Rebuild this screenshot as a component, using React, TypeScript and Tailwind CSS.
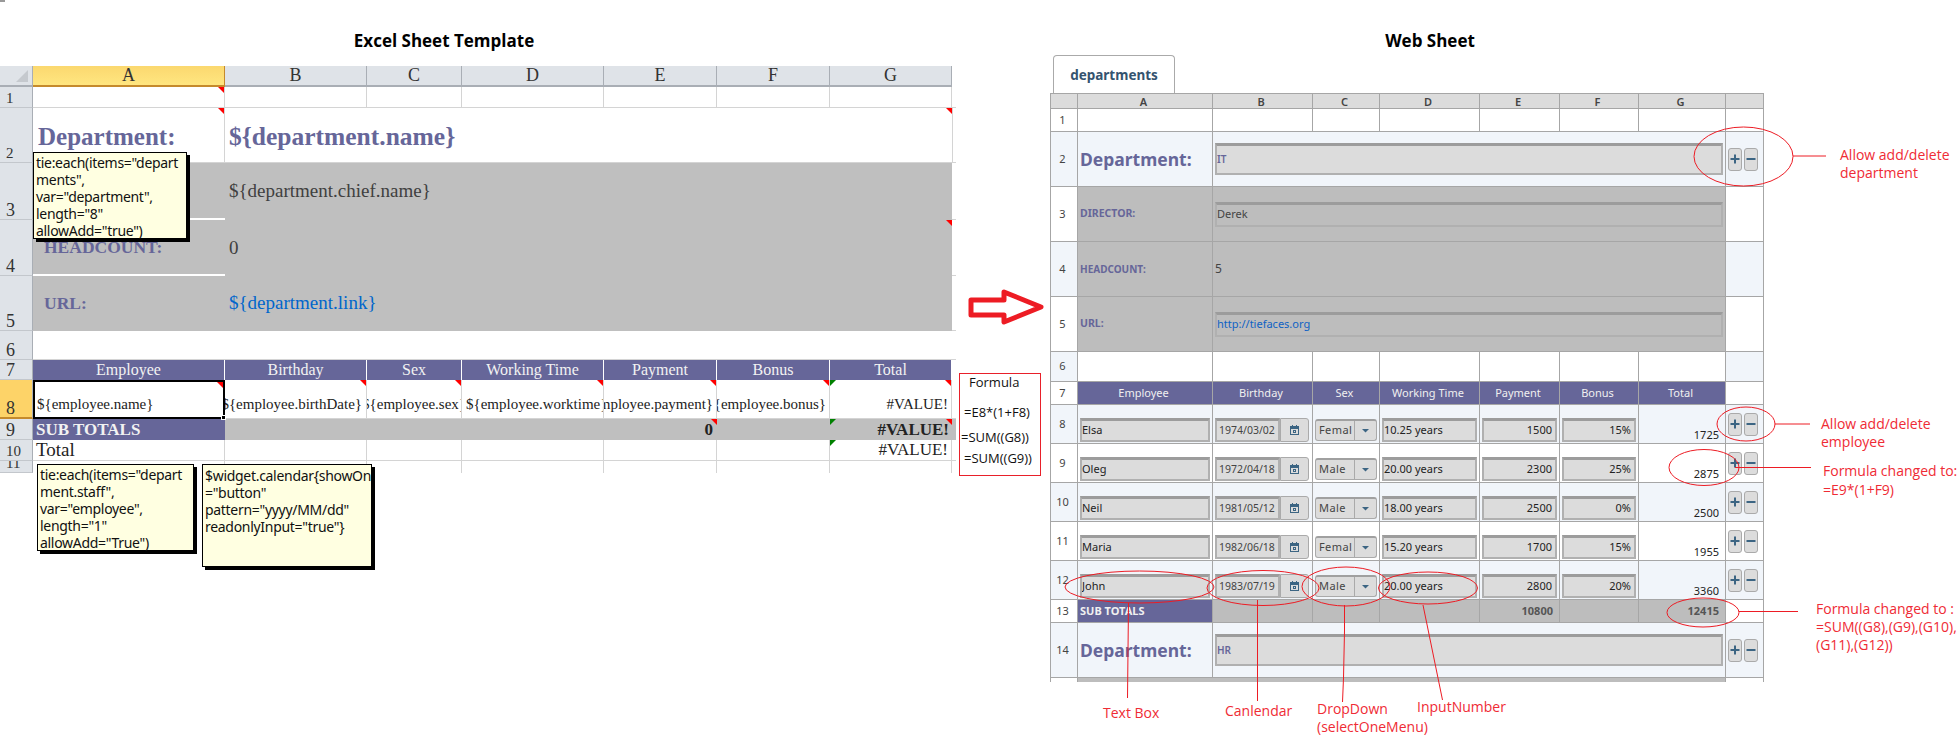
const serif = "font-['Liberation_Serif',serif]";

function Flag({ color = 'red' }: { color?: 'red' | 'green' }) {
  if (color === 'green') {
    return <span className="absolute left-0 top-0 h-[6px] w-[6px] bg-[#008000] [clip-path:polygon(0_0,100%_0,0_100%)]" />;
  }
  return <span className="absolute right-0 top-0 h-[6px] w-[6px] bg-[#ff0000] [clip-path:polygon(0_0,100%_0,100%_100%)]" />;
}

function XHead({ label, active }: { label: string; active?: boolean }) {
  return (
    <div
      className={
        active
          ? "flex items-center justify-center border-r border-b-2 border-r-[#c58a2c] border-b-[#c58a2c] bg-gradient-to-b from-[#fbd86f] to-[#ffe680] font-['Liberation_Serif',serif] text-[18px] text-[#333]"
          : "flex items-center justify-center border-r border-b-2 border-r-[#a9aeb5] border-b-[#a9aeb5] bg-[#dfe3e8] font-['Liberation_Serif',serif] text-[18px] text-[#333]"
      }
    >
      {label}
    </div>
  );
}

function XRow({ n, active, small }: { n: number; active?: boolean; small?: boolean }) {
  return (
    <div
      className={
        (active ? 'border-b-2 border-b-[#c58a2c] bg-[#fdd368] ' : 'border-b border-b-[#c3c7cc] bg-[#dfe3e8] ') +
        (small ? 'text-[15px] ' : 'text-[18px] ') +
        "flex items-end overflow-hidden border-r border-r-[#a9aeb5] pl-[6px] font-['Liberation_Serif',serif] leading-[18px] text-[#333]"
      }
    >
      {n}
    </div>
  );
}

function XCell({ className = '', children }: { className?: string; children?: React.ReactNode }) {
  return <div className={'relative overflow-hidden whitespace-nowrap border-r border-b border-[#d4d4d4] ' + className}>{children}</div>;
}

function ExcelSheet() {
  const heads = ['Employee', 'Birthday', 'Sex', 'Working Time', 'Payment', 'Bonus', 'Total'];
  return (
    <div className={'grid w-fit grid-cols-[33px_192px_142px_95px_142px_113px_113px_122px_4px] grid-rows-[21px_21px_55px_57px_56px_55px_29px_20px_39px_21px_21px_12px] ' + serif}>
      <div className="relative border-r border-b-2 border-r-[#a9aeb5] border-b-[#a9aeb5] bg-[#dfe3e8]">
        <span className="absolute bottom-[3px] right-[4px] h-[12px] w-[12px] bg-[#c5c9ce] [clip-path:polygon(100%_0,100%_100%,0_100%)]" />
      </div>
      <XHead label="A" active />
      {['B', 'C', 'D', 'E', 'F', 'G'].map((c) => (
        <XHead key={c} label={c} />
      ))}
      <div />

      <XRow n={1} small />
      <XCell><Flag /></XCell>
      <XCell /><XCell /><XCell /><XCell /><XCell /><XCell />
      <div className="border-b border-[#d4d4d4]" />

      <XRow n={2} small />
      <XCell className="pl-[5px] pt-[10px] text-[25px] font-bold text-[#666699]"><Flag />Department:</XCell>
      <XCell className="col-span-6 border-r-0 pl-[4px] pt-[10px] text-[25.5px] font-bold text-[#666699]"><Flag />{'${department.name}'}</XCell>
      <div className="border-b border-l border-[#d4d4d4]" />

      <XRow n={3} />
      <div className="border-b-2 border-white bg-[#bfbfbf]" />
      <div className="col-span-6 flex items-center bg-[#bfbfbf] pl-[4px] text-[19px] text-[#404040]">{'${department.chief.name}'}</div>
      <div className="border-b border-[#d4d4d4]" />

      <XRow n={4} />
      <div className="flex items-center border-b-2 border-white bg-[#bfbfbf] pl-[11px] text-[17.5px] font-bold text-[#666699]">HEADCOUNT:</div>
      <div className="relative col-span-6 flex items-center bg-[#bfbfbf] pl-[4px] text-[19px] text-[#404040]"><Flag />0</div>
      <div className="border-b border-[#d4d4d4]" />

      <XRow n={5} />
      <div className="flex items-center bg-[#bfbfbf] pl-[11px] text-[17.5px] font-bold text-[#666699]">URL:</div>
      <div className="col-span-6 flex items-center bg-[#bfbfbf] pl-[4px] text-[19px] text-[#0066cc]">{'${department.link}'}</div>
      <div className="border-b border-[#d4d4d4]" />

      <XRow n={6} />
      <XCell className="col-span-7 border-r-0" />
      <div className="border-b border-[#d4d4d4]" />

      <XRow n={7} />
      {heads.map((h) => (
        <div key={h} className="flex items-center justify-center border-r border-white bg-[#666699] text-[16px] text-[#f2f2f2]">{h}</div>
      ))}
      <div />

      <XRow n={8} active />
      <div className="relative flex items-end border-2 border-black bg-white pb-[2px] pl-[2px] text-[15px] text-[#222]">
        <Flag />
        {'${employee.name}'}
        <span className="absolute bottom-[-3px] right-[-3px] z-10 h-[5px] w-[5px] border border-white bg-black" />
      </div>
      <XCell className="flex items-end justify-end pb-[3px] pr-[4px] text-[15px] text-[#222]"><Flag /><span className="shrink-0">{'${employee.birthDate}'}</span></XCell>
      <XCell className="flex items-end justify-center pb-[3px] text-[15px] text-[#222]"><Flag /><span className="shrink-0">{'${employee.sex}'}</span></XCell>
      <XCell className="flex items-end pb-[3px] pl-[4px] text-[15px] text-[#222]"><Flag />{'${employee.worktime}'}</XCell>
      <XCell className="flex items-end justify-end pb-[3px] pr-[3px] text-[15px] text-[#222]"><Flag /><span className="shrink-0">{'${employee.payment}'}</span></XCell>
      <XCell className="flex items-end justify-end pb-[3px] pr-[3px] text-[15px] text-[#222]"><Flag /><span className="shrink-0">{'${employee.bonus}'}</span></XCell>
      <XCell className="flex items-end justify-end pb-[3px] pr-[3px] text-[15px] text-[#222]"><Flag /><Flag color="green" />#VALUE!</XCell>
      <div className="border-b border-[#d4d4d4]" />

      <XRow n={9} />
      <div className="flex items-center bg-[#666699] pl-[3px] text-[17px] font-bold text-[#f2f2f2]">SUB TOTALS</div>
      <div className="bg-[#bfbfbf]" /><div className="bg-[#bfbfbf]" /><div className="bg-[#bfbfbf]" />
      <div className="relative flex items-center justify-end bg-[#bfbfbf] pr-[4px] text-[17px] font-bold text-[#222]"><Flag />0</div>
      <div className="bg-[#bfbfbf]" />
      <div className="relative flex items-center justify-end bg-[#bfbfbf] pr-[3px] text-[17px] font-bold text-[#222]"><Flag /><Flag color="green" />#VALUE!</div>
      <div className="bg-[#bfbfbf]" />

      <XRow n={10} small />
      <XCell className="pl-[3px] text-[19px] leading-[20px] text-[#222]">Total</XCell>
      <XCell /><XCell /><XCell /><XCell /><XCell />
      <XCell className="pr-[3px] text-right text-[17px] leading-[20px] text-[#222]"><Flag color="green" />#VALUE!</XCell>
      <div className="border-b border-[#d4d4d4]" />

      <XRow n={11} small />
      <div className="border-r border-[#d4d4d4]" /><div className="border-r border-[#d4d4d4]" /><div className="border-r border-[#d4d4d4]" />
      <div className="border-r border-[#d4d4d4]" /><div className="border-r border-[#d4d4d4]" /><div className="border-r border-[#d4d4d4]" /><div className="border-r border-[#d4d4d4]" />
      <div />
    </div>
  );
}

function Note({ className, lines }: { className: string; lines: string[] }) {
  return (
    <div className={"absolute whitespace-nowrap border border-black bg-[#ffffe1] font-['Noto_Sans',sans-serif] text-[14px] leading-[17px] tracking-[-0.3px] text-[#111] shadow-[3px_3px_0_#000] " + className}>
      {lines.map((l) => (
        <div key={l}>{l}</div>
      ))}
    </div>
  );
}

function WCell({ className = '', children }: { className?: string; children?: React.ReactNode }) {
  return <div className={'relative border-r border-b border-[#a6a6a6] ' + className}>{children}</div>;
}

function WRowNum({ n, blue }: { n?: number; blue?: boolean }) {
  return (
    <div className={(blue ? 'bg-[#f1f5fa] ' : 'bg-white ') + 'flex items-center justify-center border-r border-b border-[#a6a6a6] pr-[3px] text-[11px] text-[#444]'}>
      {n}
    </div>
  );
}

function Field({ className = '', children }: { className?: string; children?: React.ReactNode }) {
  return (
    <div className={'flex items-center overflow-hidden whitespace-nowrap border-2 border-[#b0b0b0] border-t-[3px] border-t-[#9c9c9c] ' + className}>
      {children}
    </div>
  );
}

function AddDelete() {
  return (
    <div className="flex gap-[2px] pl-[2px]">
      {['add', 'del'].map((k) => (
        <div key={k} className="flex h-[23px] w-[14px] items-center justify-center rounded-[3px] border border-[#aaa] bg-[#dcdcdc]">
          <svg width="10" height="10" viewBox="0 0 10 10">
            {k === 'add' && <rect x="4" y="0.5" width="2" height="9" fill="#3c6583" />}
            <rect x="0.5" y="4" width="9" height="2" fill="#3c6583" />
          </svg>
        </div>
      ))}
    </div>
  );
}

function CalendarIcon() {
  return (
    <svg width="9" height="10" viewBox="0 0 9 10" fill="none" stroke="#3c6583">
      <rect x="0.5" y="1.5" width="8" height="8" />
      <path d="M0.5 3h8" strokeWidth="2" />
      <path d="M2.5 0v2M6.5 0v2" />
      <rect x="3.5" y="5.5" width="2" height="2" />
    </svg>
  );
}

const staff = [
  { n: 8, name: 'Elsa', date: '1974/03/02', sex: 'Femal', time: '10.25 years', pay: '1500', bonus: '15%', total: '1725' },
  { n: 9, name: 'Oleg', date: '1972/04/18', sex: 'Male', time: '20.00 years', pay: '2300', bonus: '25%', total: '2875' },
  { n: 10, name: 'Neil', date: '1981/05/12', sex: 'Male', time: '18.00 years', pay: '2500', bonus: '0%', total: '2500' },
  { n: 11, name: 'Maria', date: '1982/06/18', sex: 'Femal', time: '15.20 years', pay: '1700', bonus: '15%', total: '1955' },
  { n: 12, name: 'John', date: '1983/07/19', sex: 'Male', time: '20.00 years', pay: '2800', bonus: '20%', total: '3360' },
];

function WebSheet() {
  const cols = ['A', 'B', 'C', 'D', 'E', 'F', 'G'];
  const heads = ['Employee', 'Birthday', 'Sex', 'Working Time', 'Payment', 'Bonus', 'Total'];
  return (
    <div className="grid w-fit grid-cols-[27px_135px_100px_67px_100px_80px_79px_87px_38px] grid-rows-[15px_23px_55px_55px_55px_55px_30px_23px_39px_39px_39px_39px_39px_23px_55px_4px] overflow-hidden border-l border-t border-[#a6a6a6] font-['Noto_Sans',sans-serif] text-[11px] text-[#333]">
      <div className="border-r border-b border-[#a6a6a6] bg-[#dcdcdc]" />
      {cols.map((c) => (
        <div key={c} className="flex items-center justify-center border-r border-b border-[#a6a6a6] bg-[#dcdcdc] pr-[3px] font-semibold leading-none text-[#444]">{c}</div>
      ))}
      <div className="border-r border-b border-[#a6a6a6] bg-[#dcdcdc]" />

      <WRowNum n={1} />
      <WCell /><WCell /><WCell /><WCell /><WCell /><WCell /><WCell /><WCell />

      <WRowNum n={2} blue />
      <WCell className="flex items-center bg-[#f1f5fa] pl-[2px] text-[17.5px] font-bold text-[#666699]">Department:</WCell>
      <WCell className="col-span-6 flex items-center bg-[#f1f5fa] pl-[2px] pr-[2px]">
        <Field className="h-[32px] w-full bg-[#dcdcdc] text-[10px] font-semibold text-[#666699]">IT</Field>
      </WCell>
      <WCell className="flex items-center bg-[#f1f5fa]"><AddDelete /></WCell>

      <WRowNum n={3} />
      <WCell className="flex items-center bg-[#bdbdbd] pl-[2px] text-[10.5px] font-bold text-[#666699]">DIRECTOR:</WCell>
      <WCell className="col-span-6 flex items-center bg-[#bdbdbd] pl-[2px] pr-[2px]">
        <Field className="h-[25px] w-full text-[#444]">Derek</Field>
      </WCell>
      <WCell />

      <WRowNum n={4} blue />
      <WCell className="flex items-center bg-[#bdbdbd] pl-[2px] text-[10px] font-bold text-[#666699]">HEADCOUNT:</WCell>
      <WCell className="col-span-6 flex items-center bg-[#bdbdbd] pl-[2px] text-[12px] text-[#444]">5</WCell>
      <WCell className="bg-[#f1f5fa]" />

      <WRowNum n={5} />
      <WCell className="flex items-center bg-[#bdbdbd] pl-[2px] text-[10.5px] font-bold text-[#666699]">URL:</WCell>
      <WCell className="col-span-6 flex items-center bg-[#bdbdbd] pl-[2px] pr-[2px]">
        <Field className="h-[25px] w-full text-[#0f62c4]">http://tiefaces.org</Field>
      </WCell>
      <WCell />

      <WRowNum n={6} blue />
      <WCell /><WCell /><WCell /><WCell /><WCell /><WCell /><WCell />
      <WCell className="bg-[#f1f5fa]" />

      <WRowNum n={7} />
      {heads.map((h) => (
        <WCell key={h} className="flex items-center justify-center bg-[#666699] pr-[3px] text-[#f0f0f0]">{h}</WCell>
      ))}
      <WCell />

      {staff.map((p, i) => {
        const bg = i % 2 === 0 ? 'bg-[#f1f5fa] ' : 'bg-white ';
        return [
          <WRowNum key={p.n + 'n'} n={p.n} blue={i % 2 === 0} />,
          <WCell key={p.n + 'a'} className={bg + 'px-[2px] pt-[13px]'}>
            <Field className="h-[24px] bg-[#dcdcdc] text-[#222]">{p.name}</Field>
          </WCell>,
          <WCell key={p.n + 'b'} className={bg + 'flex items-start pl-[2px] pt-[13px]'}>
            <Field className="h-[24px] w-[65px] bg-[#dcdcdc] pl-[2px] text-[10.5px] text-[#444]">{p.date}</Field>
            <div className="flex h-[24px] w-[29px] items-center justify-center rounded-r-[3px] border border-[#aaa] bg-[#dcdcdc]"><CalendarIcon /></div>
          </WCell>,
          <WCell key={p.n + 'c'} className={bg + 'pl-[2px] pt-[14px]'}>
            <div className="flex h-[22px] w-[62px] items-center rounded-[3px] border border-[#aaa] border-t-2 border-t-[#a0a0a0] bg-[#dcdcdc]">
              <div className="w-[38px] overflow-hidden pl-[3px] tracking-[0.4px] text-[#444]">{p.sex}</div>
              <div className="flex h-full flex-1 items-center justify-center border-l border-[#aaa]">
                <span className="h-[4px] w-[8px] bg-[#3c6583] [clip-path:polygon(0_0,100%_0,50%_100%)]" />
              </div>
            </div>
          </WCell>,
          <WCell key={p.n + 'd'} className={bg + 'px-[2px] pt-[13px]'}>
            <Field className="h-[24px] bg-[#dcdcdc] text-[#222]">{p.time}</Field>
          </WCell>,
          <WCell key={p.n + 'e'} className={bg + 'px-[2px] pt-[13px]'}>
            <Field className="h-[24px] justify-end bg-[#dcdcdc] pr-[3px] text-[#222]">{p.pay}</Field>
          </WCell>,
          <WCell key={p.n + 'f'} className={bg + 'px-[2px] pt-[13px]'}>
            <Field className="h-[24px] justify-end bg-[#dcdcdc] pr-[3px] text-[#222]">{p.bonus}</Field>
          </WCell>,
          <WCell key={p.n + 'g'} className={bg + 'flex items-end justify-end pr-[6px] text-[#222]'}>{p.total}</WCell>,
          <WCell key={p.n + 'x'} className={bg + 'flex items-center'}><AddDelete /></WCell>,
        ];
      })}

      <WRowNum n={13} />
      <WCell className="flex items-center bg-[#666699] pl-[2px] text-[11px] font-bold text-[#f0f0f0]">SUB TOTALS</WCell>
      <WCell className="bg-[#bdbdbd]" /><WCell className="bg-[#bdbdbd]" /><WCell className="bg-[#bdbdbd]" />
      <WCell className="flex items-center justify-end bg-[#bdbdbd] pr-[6px] font-bold text-[#555]">10800</WCell>
      <WCell className="bg-[#bdbdbd]" />
      <WCell className="flex items-center justify-end bg-[#bdbdbd] pr-[6px] font-bold text-[#555]">12415</WCell>
      <WCell />

      <WRowNum n={14} blue />
      <WCell className="flex items-center bg-[#f1f5fa] pl-[2px] text-[17.5px] font-bold text-[#666699]">Department:</WCell>
      <WCell className="col-span-6 flex items-center bg-[#f1f5fa] pl-[2px] pr-[2px]">
        <Field className="h-[32px] w-full bg-[#dcdcdc] text-[10px] font-semibold text-[#666699]">HR</Field>
      </WCell>
      <WCell className="flex items-center bg-[#f1f5fa]"><AddDelete /></WCell>

      <div className="border-r border-[#a6a6a6] bg-white" />
      <div className="col-span-7 border-r border-[#a6a6a6] bg-[#bdbdbd]" />
      <div className="border-r border-[#a6a6a6]" />
    </div>
  );
}

function Callout({ className, lines }: { className: string; lines: string[] }) {
  return (
    <div className={"absolute whitespace-nowrap font-['Open_Sans',sans-serif] text-[14px] text-[#ef2b35] " + className}>
      {lines.map((l) => (
        <div key={l}>{l}</div>
      ))}
    </div>
  );
}

function Annotations() {
  return (
    <>
      <svg className="pointer-events-none absolute left-0 top-0" width="1960" height="746" viewBox="0 0 1960 746" fill="none" stroke="#ed1c24">
        <path d="M971 300H1004V292L1041 307L1004 322V315H971Z" strokeWidth="5" strokeLinejoin="round" />
        <ellipse cx="1743.5" cy="156.5" rx="49.5" ry="29.5" />
        <path d="M1793 156H1826" />
        <ellipse cx="1746" cy="424" rx="29" ry="17" />
        <path d="M1775 424H1810" />
        <ellipse cx="1704" cy="467.5" rx="35" ry="18" />
        <path d="M1735 467.5H1811" />
        <ellipse cx="1703" cy="612.5" rx="36" ry="14.5" />
        <path d="M1739 611.5H1798" />
        <ellipse cx="1139.5" cy="587" rx="74.5" ry="16" />
        <ellipse cx="1263" cy="588" rx="56" ry="17.5" />
        <ellipse cx="1346" cy="586.5" rx="44" ry="19.5" />
        <ellipse cx="1428" cy="588" rx="49.5" ry="16" />
        <path d="M1128.5 603L1127.5 698" />
        <path d="M1257.5 600V701" />
        <path d="M1344.5 605V631L1343.5 678L1342.5 702" />
        <path d="M1423 605L1442.5 700" />
      </svg>

      <Callout className="left-[1840px] top-[146px] leading-[18px]" lines={['Allow add/delete', 'department']} />
      <Callout className="left-[1821px] top-[415px] leading-[18px]" lines={['Allow add/delete', 'employee']} />
      <Callout className="left-[1823px] top-[461px] leading-[19px]" lines={['Formula changed to:', '=E9*(1+F9)']} />
      <Callout className="left-[1816px] top-[600px] leading-[18px]" lines={['Formula changed to :', '=SUM((G8),(G9),(G10),', '(G11),(G12))']} />
      <Callout className="left-[1103px] top-[704px] leading-[18px]" lines={['Text Box']} />
      <Callout className="left-[1225px] top-[702px] leading-[18px]" lines={['Canlendar']} />
      <Callout className="left-[1317px] top-[700px] leading-[18px]" lines={['DropDown', '(selectOneMenu)']} />
      <Callout className="left-[1417px] top-[698px] leading-[18px]" lines={['InputNumber']} />

      <div className="absolute left-[959px] top-[373px] h-[103px] w-[82px] whitespace-nowrap border border-[#e8202a] font-['Open_Sans',sans-serif] text-[13px] leading-[16px] text-[#111]">
        <div className="pl-[9px]">Formula</div>
        <div className="mt-[14px] pl-[4px]">=E8*(1+F8)</div>
        <div className="mt-[9px] pl-[1px]">=SUM((G8))</div>
        <div className="mt-[5px] pl-[4px]">=SUM((G9))</div>
      </div>
    </>
  );
}

export default function App() {
  return (
    <div className="relative flex h-[746px] w-[1960px] overflow-hidden bg-white">
      <div className="absolute left-0 top-0 h-[2px] w-[5px] bg-[#999]" />
      <div className="w-[1050px] shrink-0">
        <div className="flex h-[66px] w-[888px] items-end justify-center pb-[13px] font-['Open_Sans',sans-serif] text-[17px] font-bold text-black">
          Excel Sheet Template
        </div>
        <ExcelSheet />
      </div>
      <div className="w-[760px] shrink-0">
        <div className="flex h-[55px] w-[760px] items-end justify-center pb-[2px] font-['Open_Sans',sans-serif] text-[17px] font-bold text-black">
          Web Sheet
        </div>
        <div className="ml-[3px] flex h-[38px] w-[122px] items-center justify-center rounded-t-[4px] border border-b-0 border-[#aaa] bg-white pt-[1px] font-['Noto_Sans',sans-serif] text-[13.5px] font-bold text-[#34536f]">
          departments
        </div>
        <WebSheet />
      </div>

      <Note className="left-[33px] top-[152px] h-[87px] w-[154px] pl-[2px] pt-[1px]" lines={['tie:each(items="depart', 'ments",', 'var="department",', 'length="8"', 'allowAdd="true")']} />
      <Note className="left-[37px] top-[464px] h-[87px] w-[157px] pl-[2px] pt-[1px]" lines={['tie:each(items="depart', 'ment.staff",', 'var="employee",', 'length="1"', 'allowAdd="True")']} />
      <Note className="left-[202px] top-[464px] h-[103px] w-[170px] pl-[2px] pt-[2px]" lines={['$widget.calendar{showOn', '="button"', 'pattern="yyyy/MM/dd"', 'readonlyInput="true"}']} />

      <Annotations />
    </div>
  );
}
